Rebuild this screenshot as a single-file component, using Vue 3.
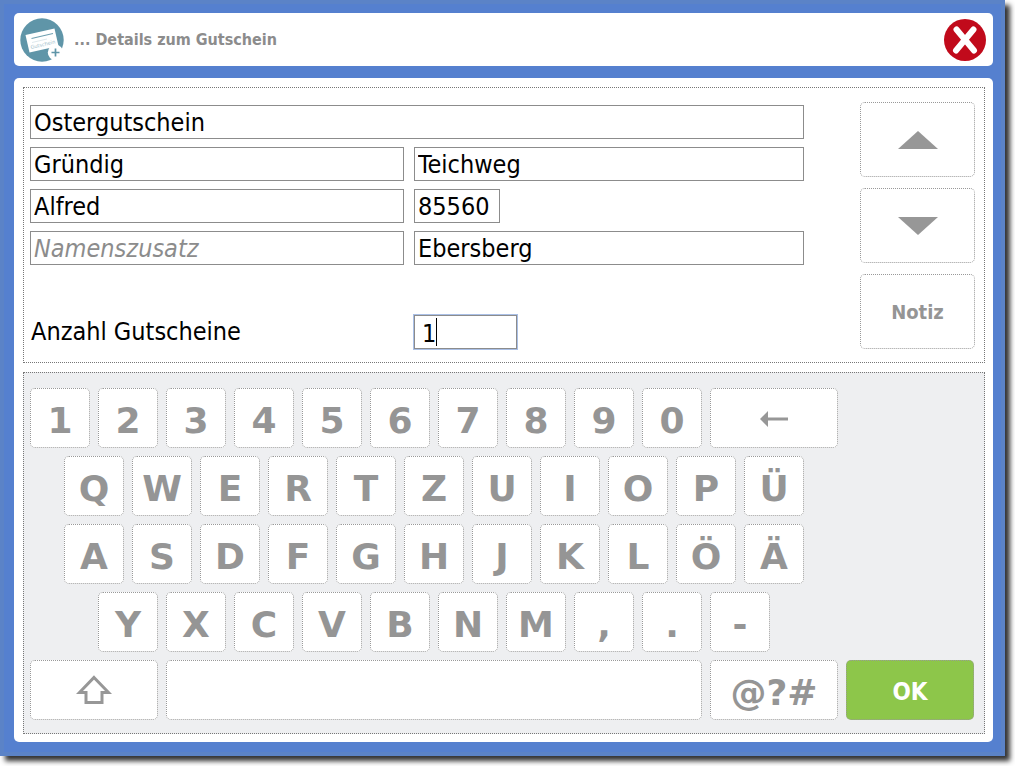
<script setup>
import { ref } from 'vue'

const title = ref('Ostergutschein')
const lastName = ref('Gründig')
const firstName = ref('Alfred')
const suffix = ref('')
const street = ref('Teichweg')
const zip = ref('85560')
const city = ref('Ebersberg')
const amount = ref('1')

const rows = [
  { name: 'digits', keys: [...'1234567890'] },
  { name: 'upper', keys: [...'QWERTZUIOPÜ'] },
  { name: 'home', keys: [...'ASDFGHJKLÖÄ'] },
  { name: 'lower', keys: [...'YXCVBNM,.-'] },
]

function press(key) {
  amount.value += key
}
function erase() {
  amount.value = amount.value.slice(0, -1)
}
</script>

<template>
  <div class="desktop">
    <div class="window">
      <header class="titlebar">
        <svg class="logo" viewBox="0 0 44 44" aria-hidden="true">
          <circle cx="22" cy="22" r="21.7" fill="#5f95a8" />
          <path d="M5.500 17 L34.500 10.500 L38.500 28 L9.500 34.500 Z" fill="#fff" />
          <path d="M11.500 20.500 L33 15.500" stroke="#6f9fb0" stroke-width="1.200" />
          <path d="M12 24.500 L27 21" stroke="#d5e2e7" stroke-width="0.800" />
          <text x="11" y="31" transform="rotate(-13 11 31)" class="logo-text">Gutschein</text>
          <circle cx="35.500" cy="34.500" r="7.700" fill="#fff" />
          <path d="M35.500 30.500 V38.500 M31.500 34.500 H39.500" stroke="#5f95a8" stroke-width="1.700" />
        </svg>
        <h1>... Details zum Gutschein</h1>
        <button class="close" type="button" aria-label="Schließen">
          <svg viewBox="0 0 42 42" aria-hidden="true">
            <circle cx="21" cy="21" r="21" fill="#c10a1b" />
            <path d="M12.500 10.500 L30 31.500 M29.500 10.500 L12 31.500" stroke="#fff" stroke-width="6" stroke-linecap="round" />
          </svg>
        </button>
      </header>

      <main class="content">
        <section class="details">
          <form class="fields" @submit.prevent>
            <input v-model="title" class="wide" type="text" aria-label="Bezeichnung">
            <input v-model="lastName" type="text" aria-label="Nachname">
            <input v-model="street" type="text" aria-label="Straße">
            <input v-model="firstName" type="text" aria-label="Vorname">
            <input v-model="zip" class="zip" type="text" aria-label="Postleitzahl">
            <input v-model="suffix" type="text" placeholder="Namenszusatz" aria-label="Namenszusatz">
            <input v-model="city" type="text" aria-label="Ort">
            <label for="amount">Anzahl Gutscheine</label>
            <div class="amount">
              <input id="amount" v-model="amount" type="text">
              <span class="caret"></span>
            </div>
          </form>
          <div class="side">
            <button type="button" aria-label="Nach oben">
              <svg class="arrow" viewBox="0 0 40 18"><path d="M20 0 L40 18 H0 Z" fill="#979797" /></svg>
            </button>
            <button type="button" aria-label="Nach unten">
              <svg class="arrow" viewBox="0 0 40 18"><path d="M0 0 H40 L20 18 Z" fill="#979797" /></svg>
            </button>
            <button type="button">Notiz</button>
          </div>
        </section>

        <section class="keyboard">
          <div v-for="row in rows" :key="row.name" class="row" :class="row.name">
            <button v-for="key in row.keys" :key="key" class="key" type="button" @click="press(key)">{{ key }}</button>
            <button v-if="row.name === 'digits'" class="key double" type="button" aria-label="Löschen" @click="erase">
              <svg class="back" viewBox="0 0 28 16"><path d="M0 8 L8 0 V6.500 H28 V9.500 H8 V16 Z" fill="#979797" /></svg>
            </button>
          </div>
          <div class="row">
            <button class="key double" type="button" aria-label="Umschalten">
              <svg class="shift" viewBox="0 0 36 30">
                <path d="M18 2.500 L32.500 17.500 H26 V27.500 H10 V17.500 H3.500 Z" fill="none" stroke="#979797" stroke-width="3" />
              </svg>
            </button>
            <button class="key space" type="button" aria-label="Leerzeichen" @click="press(' ')"></button>
            <button class="key double" type="button">@?#</button>
            <button class="key double ok" type="button">OK</button>
          </div>
        </section>
      </main>
    </div>
  </div>
</template>

<style>
body {
  margin: 0;
  background: #fff;
}
</style>

<style scoped>
.desktop {
  box-sizing: border-box;
  display: flex;
  min-height: 100vh;
  padding: 0 10px 10px 0;
  overflow: hidden;
}

.window {
  box-sizing: border-box;
  flex: 1;
  display: flex;
  flex-direction: column;
  gap: 12px;
  padding: 9px 8px 10px 10px;
  border: 4px solid #5b83c7;
  background: #5580cf;
  box-shadow: 5px 5px 5px #333;
  font-family: "DejaVu Sans Condensed", "DejaVu Sans", sans-serif;
}

button {
  box-sizing: border-box;
  margin: 0;
  padding: 0;
  border: 1px dotted #999;
  border-radius: 5px;
  background: #fff;
  color: #959595;
  font-family: inherit;
  font-weight: bold;
  cursor: pointer;
}

svg {
  display: block;
}

.titlebar {
  box-sizing: border-box;
  display: flex;
  align-items: center;
  height: 53px;
  padding: 0 7px 0 6px;
  border-radius: 5px;
  background: #fff;
}

.logo {
  width: 44px;
  height: 44px;
}

.logo-text {
  fill: #a3c0cb;
  font-family: "DejaVu Sans", sans-serif;
  font-size: 5px;
}

h1 {
  flex: 1;
  margin: 0 0 0 10px;
  color: #8c8c8c;
  font-size: 16px;
  line-height: 24px;
}

.close {
  border: 0;
  border-radius: 50%;
}

.close svg {
  width: 42px;
  height: 42px;
}

.content {
  flex: 1;
  display: flex;
  flex-direction: column;
  gap: 9px;
  padding: 9px 8px 8px 9px;
  border-radius: 5px;
  background: #fff;
}

.details {
  display: flex;
  gap: 56px;
  padding: 14px 9px 13px 6px;
  border: 1px dotted #777;
}

.fields {
  flex: 1;
  display: grid;
  grid-template-columns: 374fr 390fr;
  gap: 8px 10px;
  align-content: start;
  padding-top: 3px;
}

input {
  box-sizing: border-box;
  width: 100%;
  min-width: 0;
  height: 34px;
  margin: 0;
  padding: 1px 3px 0;
  border: 1px solid #8c8c8c;
  border-radius: 0;
  outline: none;
  background: #fff;
  color: #000;
  font-family: inherit;
  font-size: 25px;
}

input::placeholder {
  color: #8c8c8c;
  font-style: italic;
}

.wide {
  grid-column: 1 / -1;
}

.zip {
  width: 86px;
}

label {
  margin-top: 42px;
  padding-left: 1px;
  font-size: 25px;
  line-height: 34px;
}

.amount {
  position: relative;
  width: 103px;
  margin-top: 42px;
}

.amount input {
  display: block;
  padding: 3px 7px 0;
  box-shadow: 0 0 0 1px #a9bfe6;
  caret-color: transparent;
}

.caret {
  position: absolute;
  top: 3px;
  left: 22px;
  width: 1px;
  height: 28px;
  background: #000;
}

.side {
  display: flex;
  flex-direction: column;
  gap: 11px;
  width: 115px;
}

.side button {
  display: flex;
  align-items: center;
  justify-content: center;
  height: 75px;
  font-size: 20px;
}

.arrow {
  width: 40px;
  height: 18px;
}

.keyboard {
  flex: 1;
  display: flex;
  flex-direction: column;
  gap: 8px;
  padding: 15px 10px 13px 6px;
  border: 1px dotted #777;
  background: #eeeff1;
}

/* Each key covers two half-key columns, so rows can be staggered by one. */
.row {
  display: grid;
  grid-template-columns: repeat(28, minmax(0, 1fr));
  gap: 8px;
}

.key {
  grid-column-end: span 2;
  display: flex;
  align-items: center;
  justify-content: center;
  height: 60px;
  padding-top: 5px;
  font-family: "DejaVu Sans", sans-serif;
  font-size: 36px;
  line-height: 44px;
}

.upper .key:first-child,
.home .key:first-child {
  grid-column-start: 2;
}

.lower .key:first-child {
  grid-column-start: 3;
}

.key.double {
  grid-column-end: span 4;
}

.key.space {
  grid-column-end: span 16;
}

.key.ok {
  padding-top: 3px;
  background: #8dc64a;
  color: #fff;
  font-family: inherit;
  font-size: 24px;
}

.back {
  width: 28px;
  height: 16px;
  margin-bottom: 4px;
}

.shift {
  width: 36px;
  height: 30px;
  margin-bottom: 6px;
}
</style>
